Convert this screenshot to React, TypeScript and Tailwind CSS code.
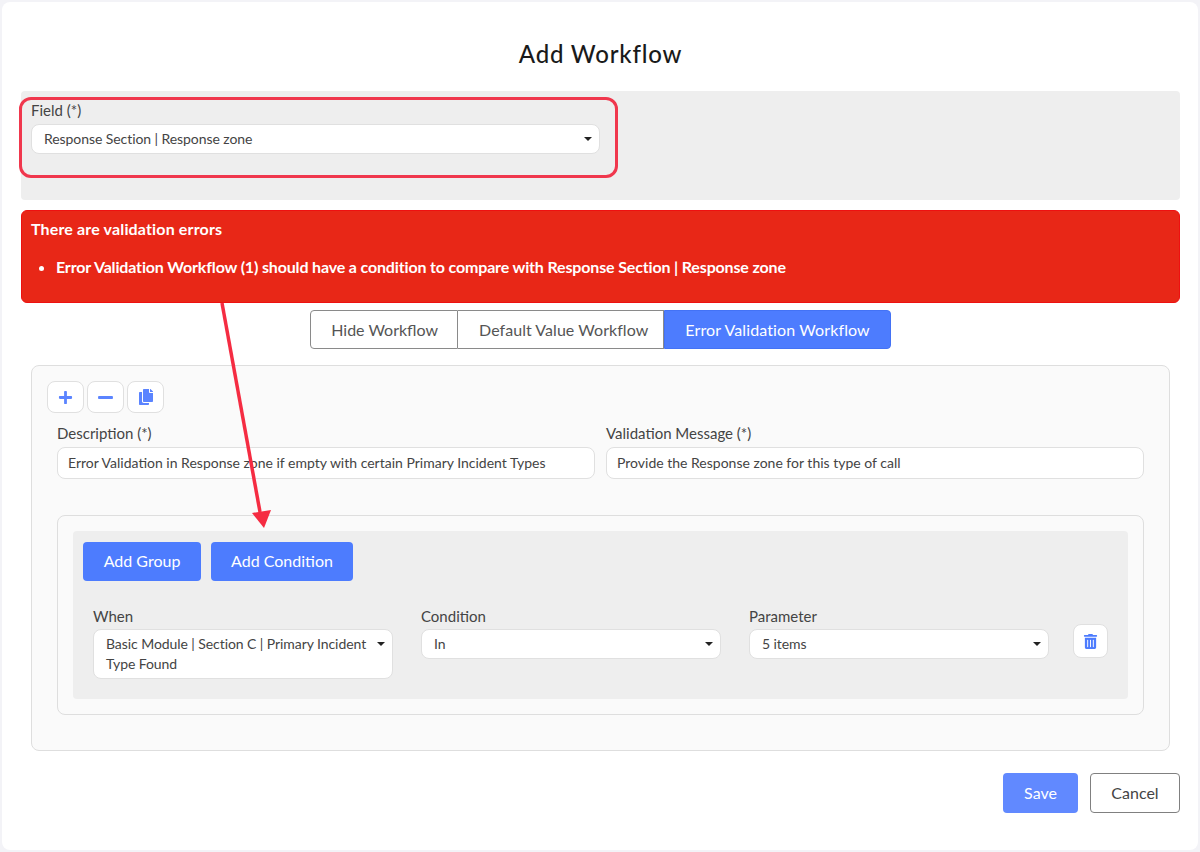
import { FaCopy, FaMinus, FaPlus, FaTrashAlt } from "react-icons/fa";

function Caret() {
  return (
    <svg width="8" height="4" viewBox="0 0 8 4" className="shrink-0">
      <path d="M0 0h8L4 4z" fill="#222" />
    </svg>
  );
}

function Select({ value, className }: { value: string; className: string }) {
  return (
    <div
      className={`flex items-start justify-between bg-white border border-[#e0e0e0] rounded-[8px] pl-[12px] pr-[7px] py-[4px] text-[14px] leading-[20px] tracking-[-0.07px] text-[#444] ${className}`}
    >
      <span>{value}</span>
      <span className="mt-[8px] ml-[6px]">
        <Caret />
      </span>
    </div>
  );
}

function TextInput({ label, value }: { label: string; value: string }) {
  return (
    <div className="flex-1">
      <div className="text-[15px] leading-[20px] text-[#444] mb-[4px]">{label}</div>
      <div className="h-[32px] bg-white border border-[#e0e0e0] rounded-[8px] px-[10px] text-[14px] leading-[30px] text-[#444]">
        {value}
      </div>
    </div>
  );
}

function IconButton({ children }: { children: React.ReactNode }) {
  return (
    <button className="w-[37px] h-[32px] flex items-center justify-center bg-white border border-[#e0e0e0] rounded-[8px] text-[#5b84ff]">
      {children}
    </button>
  );
}

export default function App() {
  return (
    <div className="w-[1200px] h-[852px] bg-[#f3f3f7] p-[2px] font-['Lato',sans-serif] relative overflow-hidden">
      <div className="w-full h-full bg-white rounded-[8px] pl-[19px] pr-[18px]">
        <h1 className="text-center text-[24px] leading-[30px] font-medium text-[#1a1a1a] pt-[37px] mb-[22px] tracking-[0.8px]">
          Add Workflow
        </h1>

        {/* Field */}
        <section className="h-[109px] bg-[#eeeeee] rounded-[4px] px-[10px] pt-[9px]">
          <div className="text-[15px] leading-[20px] text-[#444] mb-[4px]">Field (*)</div>
          <Select value="Response Section | Response zone" className="w-[569px] h-[30px]" />
        </section>

        {/* Errors */}
        <section className="mt-[10px] h-[93px] bg-[#e82717] rounded-[6px] border border-[#ee1010] px-[9px] pt-[8px] text-white font-bold">
          <div className="text-[16px] leading-[20px] tracking-[0.15px]">There are validation errors</div>
          <ul className="list-disc pl-[25px] mt-[18px] text-[16px] leading-[20px] tracking-[-0.157px]">
            <li>Error Validation Workflow (1) should have a condition to compare with Response Section | Response zone</li>
          </ul>
        </section>

        {/* Tabs */}
        <div className="mt-[7px] flex justify-center text-[16px]">
          <div className="h-[39px] pl-[20px] pr-[19px] flex items-center border border-[#8a8a8a] rounded-l-[4px] text-[#555]">
            Hide Workflow
          </div>
          <div className="h-[39px] pl-[21px] pr-[15px] flex items-center border-y border-r border-[#8a8a8a] text-[#555] tracking-[0.05px]">
            Default Value Workflow
          </div>
          <div className="h-[39px] px-[20px] flex items-center bg-[#4d7cfe] border border-[#4372f5] rounded-r-[4px] text-white tracking-[0.12px]">
            Error Validation Workflow
          </div>
        </div>

        {/* Workflow panel */}
        <section className="mt-[16px] mx-[10px] h-[386px] bg-[#fafafa] border border-[#dedede] rounded-[8px] pl-[15px] pr-[25px] pt-[15px]">
          <div className="flex gap-[3px]">
            <IconButton>
              <FaPlus size={15} />
            </IconButton>
            <IconButton>
              <FaMinus size={17} />
            </IconButton>
            <IconButton>
              <FaCopy size={16} />
            </IconButton>
          </div>

          <div className="ml-[10px] mt-[10px] flex gap-[11px]">
            <TextInput
              label="Description (*)"
              value="Error Validation in Response zone if empty with certain Primary Incident Types"
            />
            <TextInput label="Validation Message (*)" value="Provide the Response zone for this type of call" />
          </div>

          <div className="ml-[10px] mt-[36px] h-[200px] border border-[#dedede] rounded-[8px] pl-[15px] pr-[15px] pt-[15px]">
            <div className="h-[168px] bg-[#eeeeee] rounded-[4px] pl-[10px] pt-[11px]">
              <div className="flex gap-[10px]">
                <button className="w-[118px] h-[39px] bg-[#4d7cfe] rounded-[4px] text-white text-[16px] pb-[2px]">
                  Add Group
                </button>
                <button className="w-[142px] h-[39px] bg-[#4d7cfe] rounded-[4px] text-white text-[16px] pb-[2px]">
                  Add Condition
                </button>
              </div>

              <div className="mt-[25px] ml-[10px] flex items-start">
                <div className="w-[300px]">
                  <div className="text-[15px] leading-[20px] text-[#444] mb-[3px]">When</div>
                  <Select
                    value="Basic Module | Section C | Primary Incident Type Found"
                    className="w-[300px] h-[50px]"
                  />
                </div>
                <div className="w-[300px] ml-[28px]">
                  <div className="text-[15px] leading-[20px] text-[#444] mb-[3px]">Condition</div>
                  <Select value="In" className="w-[300px] h-[30px]" />
                </div>
                <div className="w-[300px] ml-[28px]">
                  <div className="text-[15px] leading-[20px] text-[#444] mb-[3px]">Parameter</div>
                  <Select value="5 items" className="w-[300px] h-[30px]" />
                </div>
                <button className="w-[35px] h-[34px] ml-[24px] mt-[18px] flex items-center justify-center bg-white border border-[#e0e0e0] rounded-[8px] text-[#4d7cfe]">
                  <FaTrashAlt size={15} />
                </button>
              </div>
            </div>
          </div>
        </section>

        {/* Footer */}
        <div className="mt-[22px] flex justify-end gap-[12px] text-[16px]">
          <button className="w-[75px] h-[40px] bg-[#6189ff] rounded-[4px] text-white">Save</button>
          <button className="w-[90px] h-[40px] border border-[#808080] rounded-[4px] text-[#444]">Cancel</button>
        </div>
      </div>

      {/* Annotation highlight */}
      <div className="absolute left-[19px] top-[97px] w-[599px] h-[81px] border-[3px] border-[#f0374d] rounded-[12px]" />

      {/* Annotation arrow */}
      <svg className="absolute left-0 top-0 pointer-events-none" width="1200" height="852">
        <line x1="222" y1="303" x2="260" y2="512" stroke="#f52c42" strokeWidth="3.5" />
        <path d="M252 513L271 510L264 528z" fill="#f52c42" />
      </svg>
    </div>
  );
}
